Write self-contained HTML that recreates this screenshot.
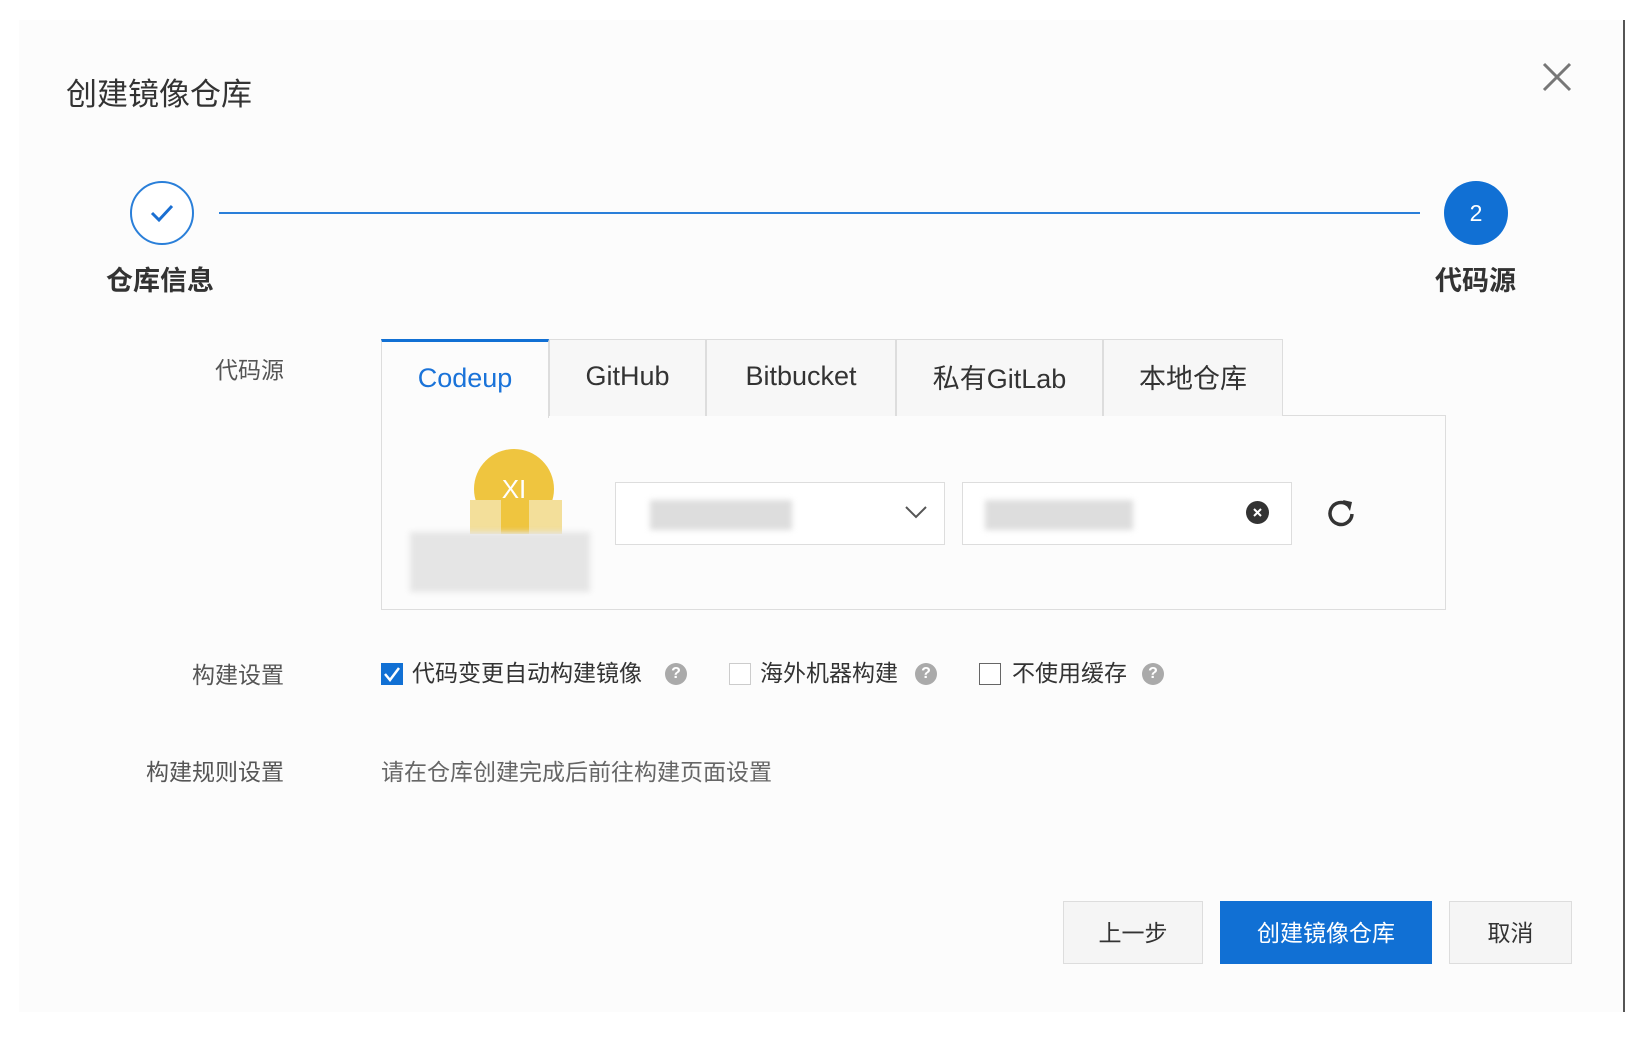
<!DOCTYPE html>
<html><head><meta charset="utf-8"><style>
*{margin:0;padding:0;box-sizing:border-box}
body{width:1648px;height:1040px;background:#fff;position:relative;overflow:hidden;font-family:"Liberation Sans","Noto Sans CJK SC",sans-serif;color:#333}
.a{position:absolute}
.modal{left:19px;top:20px;width:1606px;height:992px;background:#fcfcfc;border-right:2px solid #555}
.t{white-space:nowrap}
.lbl{font-size:23px;color:#555;text-align:right;width:200px;left:84px}
.tab{top:339px;height:77px;border:1px solid #ddd;border-bottom:none;background:#f7f7f7;font-size:27px;color:#333;display:flex;align-items:center;justify-content:center;padding-bottom:4px}
.cb{width:22px;height:22px;border:1.5px solid #666;background:#fff}
.help{width:22px;height:22px;border-radius:50%;background:#aaa;color:#fff;font-size:16px;font-weight:bold;display:flex;align-items:center;justify-content:center}
.ck{font-size:23px;color:#333}
.btn{top:901px;height:63px;display:flex;align-items:center;justify-content:center;font-size:23px;border:1.5px solid #ddd;background:#f5f5f5;color:#333;padding-bottom:3px}
.blur{background:#ddd;filter:blur(3px)}
</style></head><body>
<div class="a modal"></div>
<div class="a t" style="left:66px;top:69px;font-size:31px;color:#333">创建镜像仓库</div>
<svg class="a" style="left:1541px;top:61px" width="32" height="32"><path d="M3 3L29 29M29 3L3 29" stroke="#777" stroke-width="3"/></svg>

<div class="a" style="left:130px;top:181px;width:64px;height:64px;border:2px solid #2a7fd9;border-radius:50%;background:#fff"></div>
<svg class="a" style="left:148px;top:200px" width="28" height="26"><path d="M4 13L11 20L24 6" stroke="#1a6fd2" stroke-width="3" fill="none"/></svg>
<div class="a" style="left:219px;top:212px;width:1201px;height:2px;background:#2a7fd9"></div>
<div class="a" style="left:1444px;top:181px;width:64px;height:64px;border-radius:50%;background:#1170d4;color:#fff;font-size:23px;display:flex;align-items:center;justify-content:center">2</div>
<div class="a t" style="left:106px;top:259px;font-size:27px;font-weight:bold;color:#333">仓库信息</div>
<div class="a t" style="left:1435px;top:259px;font-size:27px;font-weight:bold;color:#333">代码源</div>

<div class="a t lbl" style="top:351px">代码源</div>
<div class="a" style="left:381px;top:415px;width:1065px;height:195px;border:1.5px solid #ddd;background:#fcfcfc"></div>
<div class="a tab" style="left:381px;width:168px;border-top:3px solid #1170d4;background:#fcfcfc;color:#1a73d9;height:79px">Codeup</div>
<div class="a tab" style="left:549px;width:157px">GitHub</div>
<div class="a tab" style="left:706px;width:190px">Bitbucket</div>
<div class="a tab" style="left:896px;width:207px">私有GitLab</div>
<div class="a tab" style="left:1103px;width:180px">本地仓库</div>

<div class="a" style="left:474px;top:449px;width:80px;height:80px;border-radius:50%;background:#efc53f;color:#fff;font-size:26px;display:flex;align-items:center;justify-content:center">XI</div>
<div class="a" style="left:470px;top:500px;width:92px;height:34px;background:#f3df9a"></div>
<div class="a" style="left:501px;top:500px;width:28px;height:34px;background:#efc53f"></div>
<div class="a blur" style="left:410px;top:532px;width:180px;height:60px;background:#e5e5e5"></div>

<div class="a" style="left:615px;top:482px;width:330px;height:63px;border:1.5px solid #ddd;background:#fff"></div>
<div class="a blur" style="left:650px;top:500px;width:142px;height:30px"></div>
<svg class="a" style="left:903px;top:503px" width="26" height="18"><path d="M3 4L13 14L23 4" stroke="#555" stroke-width="2" fill="none"/></svg>
<div class="a" style="left:962px;top:482px;width:330px;height:63px;border:1.5px solid #ddd;background:#fff"></div>
<div class="a blur" style="left:985px;top:500px;width:148px;height:30px"></div>
<div class="a" style="left:1246px;top:501px;width:23px;height:23px;border-radius:50%;background:#333"></div>
<svg class="a" style="left:1246px;top:501px" width="23" height="23"><path d="M8 8L15 15M15 8L8 15" stroke="#fff" stroke-width="2"/></svg>
<svg class="a" style="left:1324px;top:497px" width="36" height="36"><path d="M28 17A11 11 0 1 1 24 8" stroke="#333" stroke-width="3.5" fill="none"/><path d="M19 3L28 5L26 14Z" fill="#333"/></svg>

<div class="a t lbl" style="top:656px">构建设置</div>
<div class="a" style="left:381px;top:663px;width:22px;height:22px;background:#1170d4"></div>
<svg class="a" style="left:381px;top:663px" width="22" height="22"><path d="M4 11L9 17L18 5" stroke="#fff" stroke-width="2.5" fill="none"/></svg>
<div class="a t ck" style="left:412px;top:654px">代码变更自动构建镜像</div>
<div class="a help" style="left:665px;top:663px">?</div>
<div class="a cb" style="left:729px;top:663px;border-color:#ccc"></div>
<div class="a t ck" style="left:760px;top:654px">海外机器构建</div>
<div class="a help" style="left:915px;top:663px">?</div>
<div class="a cb" style="left:979px;top:663px"></div>
<div class="a t ck" style="left:1012px;top:654px">不使用缓存</div>
<div class="a help" style="left:1142px;top:663px">?</div>

<div class="a t lbl" style="top:753px">构建规则设置</div>
<div class="a t" style="left:381px;top:753px;font-size:23px;color:#666">请在仓库创建完成后前往构建页面设置</div>

<div class="a btn" style="left:1063px;width:140px">上一步</div>
<div class="a btn" style="left:1220px;width:212px;background:#1170d4;border-color:#1170d4;color:#fff">创建镜像仓库</div>
<div class="a btn" style="left:1449px;width:123px">取消</div>
</body></html>
